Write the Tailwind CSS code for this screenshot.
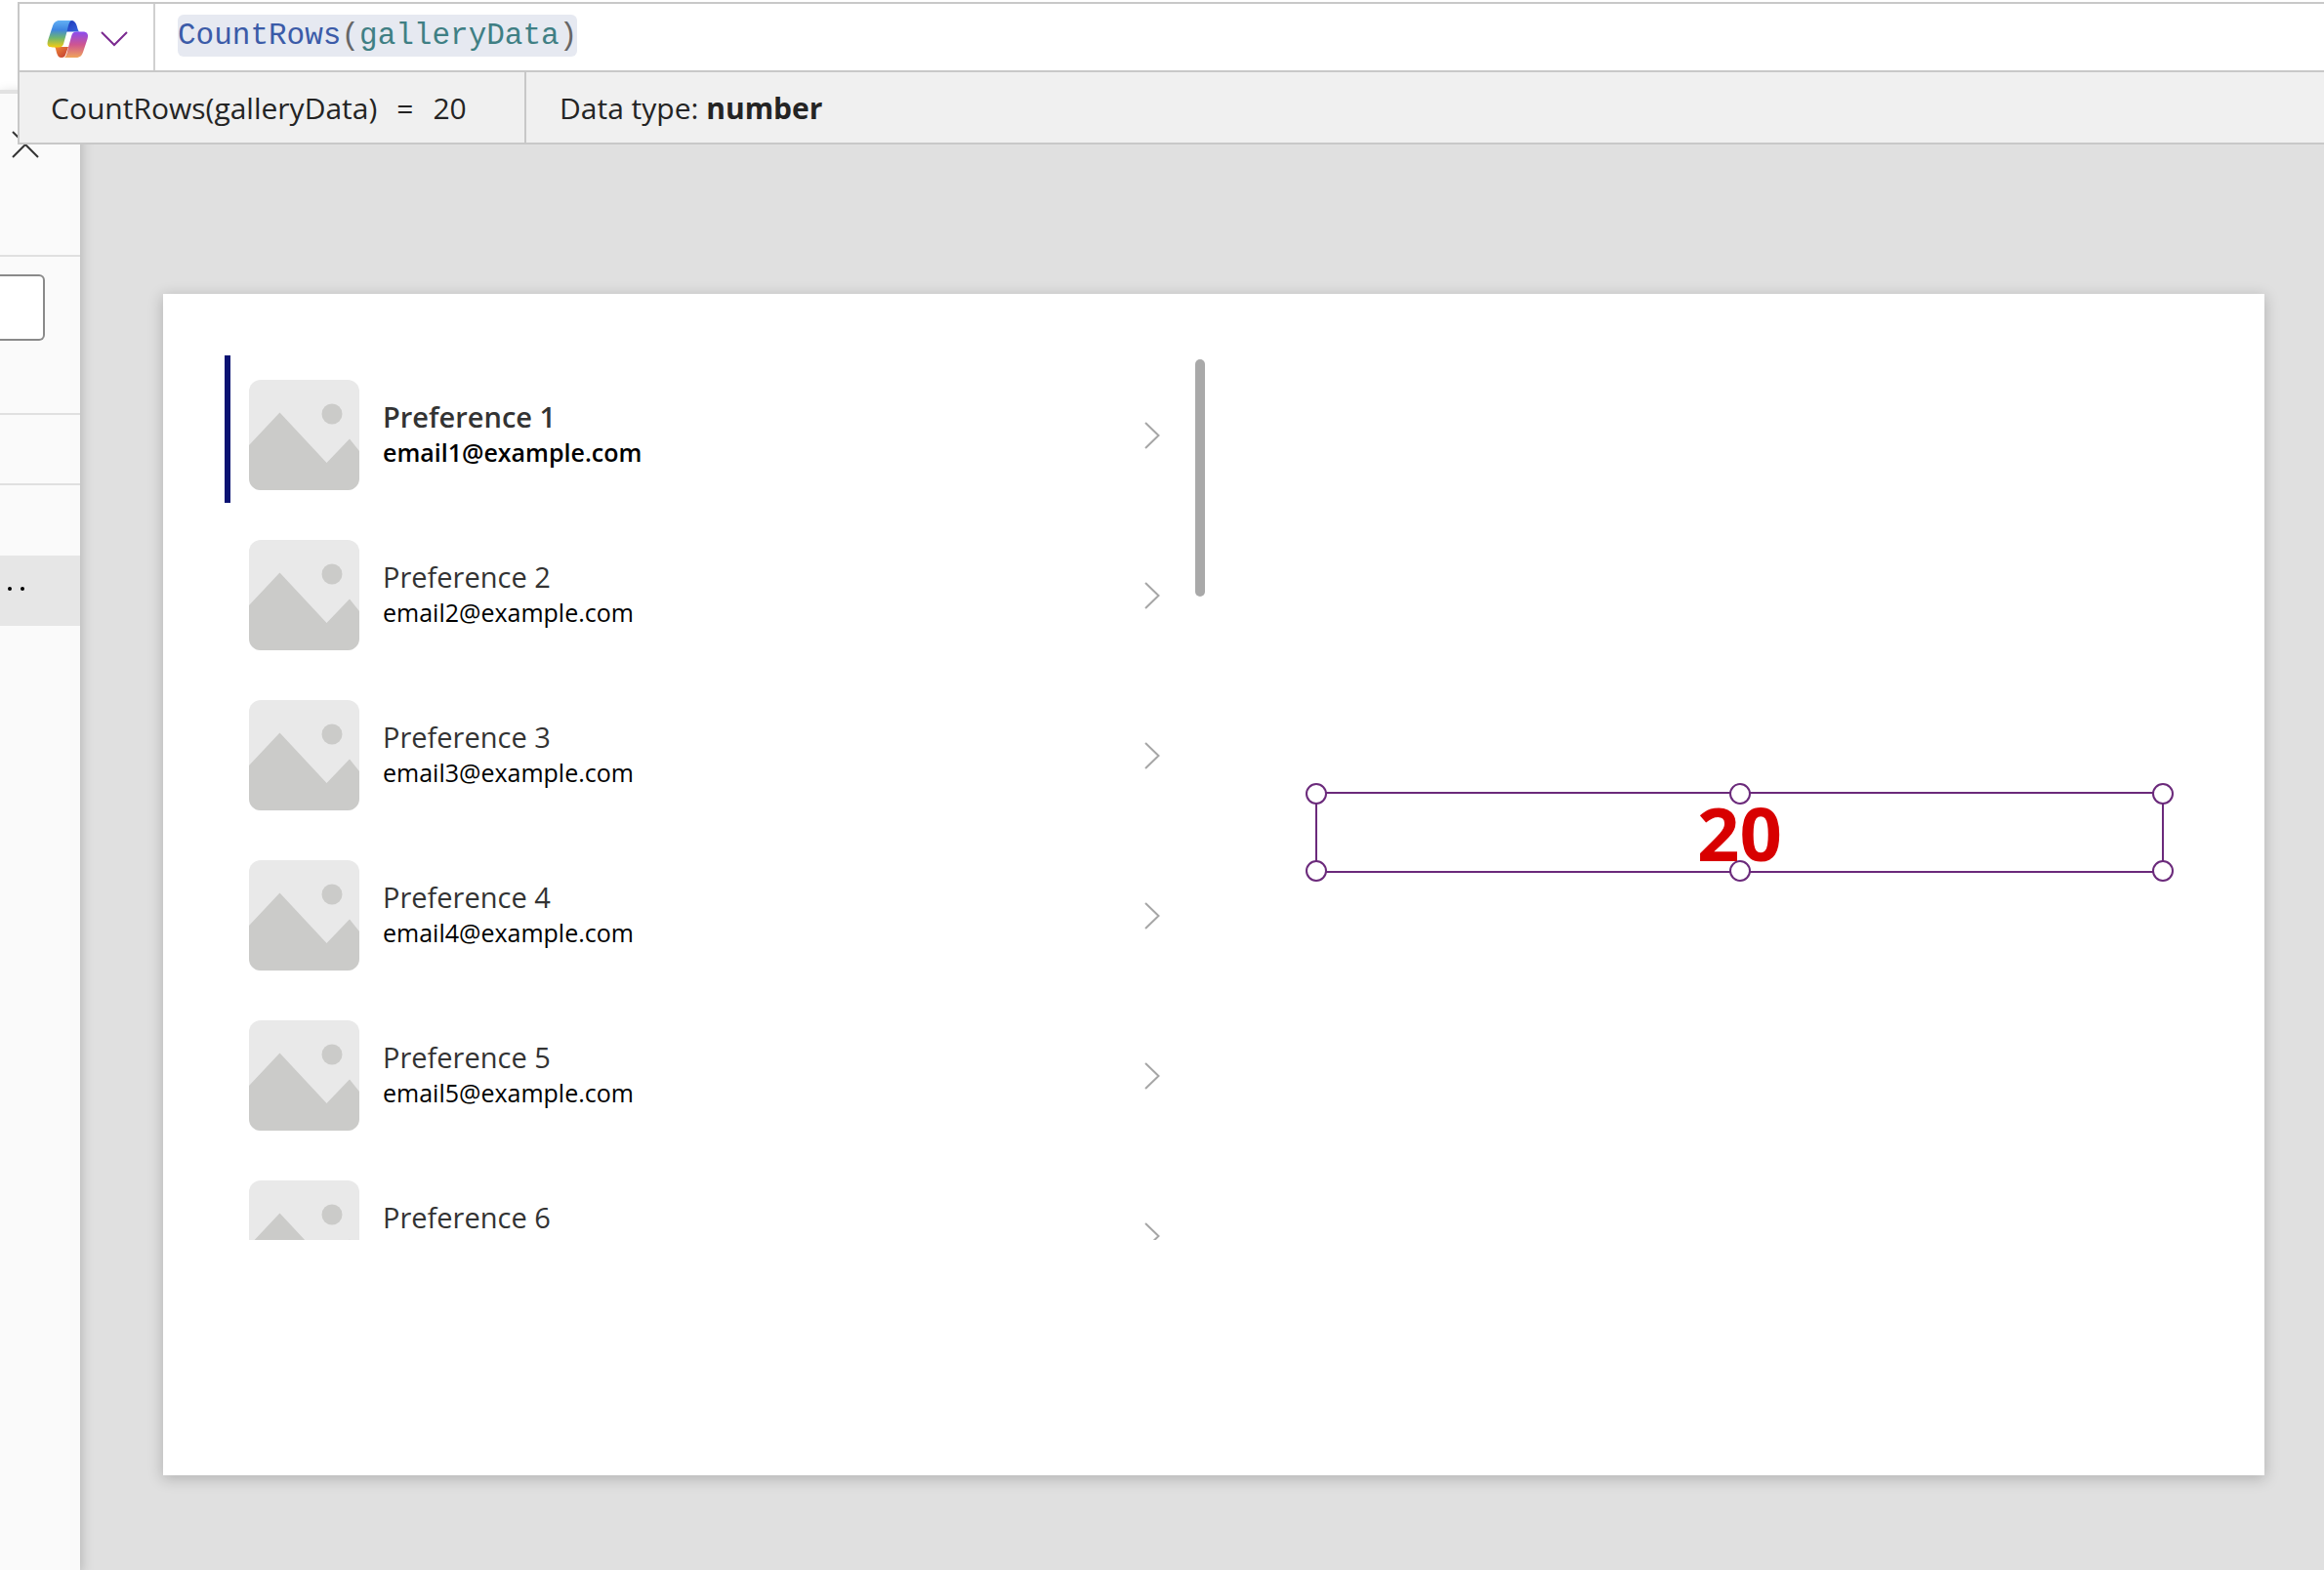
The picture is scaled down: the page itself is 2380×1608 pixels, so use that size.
<!DOCTYPE html>
<html lang="en">
<head>
<meta charset="utf-8">
<title>Canvas app studio</title>
<script src="https://cdn.jsdelivr.net/npm/@tailwindcss/browser@4"></script>
</head>
<body class="relative flex h-screen flex-col overflow-hidden bg-[#e0e0e0] font-['Open_Sans',sans-serif] text-[#242424]">

<svg class="hidden">
  <defs>
    <symbol id="placeholder" viewBox="0 0 113 113">
      <rect width="113" height="113" rx="12" fill="#e9e9e9"/>
      <circle cx="85" cy="35" r="10.5" fill="#cbcbc9"/>
      <path d="M0 67 31.500 33.500 79.500 85 103 60.500 113 73V101a12 12 0 0 1-12 12H12a12 12 0 0 1-12-12Z" fill="#cbcbc9"/>
    </symbol>
    <symbol id="chevron" viewBox="0 0 16 28">
      <path d="M1 1 14.500 14 1 27" fill="none" stroke="#a6a6a6" stroke-width="2"/>
    </symbol>
  </defs>
</svg>

<div class="h-[92px] shrink-0 bg-white"></div>

<!-- Formula bar, floating over the panel and the canvas -->
<header class="absolute top-[2px] right-0 left-[18px] z-20 border-y-2 border-l-2 border-[#c8c8c8] bg-white">
  <div class="flex h-[68px] items-stretch">
    <button type="button" aria-label="Copilot" class="flex w-[139px] items-center gap-3 border-r-2 border-[#d0d0d0] pt-1 pl-[28px]">
      <svg class="h-10 w-[43px]" viewBox="0 0 43 40">
        <defs>
          <linearGradient id="ga" x1="0" y1="0" x2="0" y2="1"><stop offset="0" stop-color="#62b0f5"/><stop offset=".35" stop-color="#3f86e0"/><stop offset=".65" stop-color="#6fb56f"/><stop offset="1" stop-color="#f5cc10"/></linearGradient>
          <linearGradient id="gb" x1="0" y1="0" x2="0" y2="1"><stop offset="0" stop-color="#8a4cf0"/><stop offset=".5" stop-color="#cf5590"/><stop offset="1" stop-color="#f0a55a"/></linearGradient>
          <linearGradient id="gc" x1="0" y1="0" x2="1" y2="1"><stop offset="0" stop-color="#1b35b8"/><stop offset="1" stop-color="#3a6be0"/></linearGradient>
          <linearGradient id="gd" x1="0" y1="0" x2="1" y2="1"><stop offset="0" stop-color="#f08a3a"/><stop offset="1" stop-color="#c0362e"/></linearGradient>
        </defs>
        <path d="M22 1h3c3 0 4.500 2 5.500 5l1.200 4c.5 2 1.300 2.500 3.300 2.500H19.500Z" fill="url(#gc)"/>
        <path d="M8 28h14l-2.500 7c-.8 2.500-2 4-4.500 4-3 0-4-2-5-5l-1-4C8.600 28.800 8.400 28.500 8 28Z" fill="url(#gd)"/>
        <path d="M26 1H13C9 1 7 3 5.500 8L1.500 20C-.5 26 .5 28.500 6 28.500h6c3 0 4.500-1.500 5.200-4l3.300-12C22 7 22.500 1 26 1Z" fill="url(#ga)"/>
        <path d="M17 39h13c4 0 6-2 7.500-7l4-12c1.500-5 0-7.500-5-7.500h-6c-3 0-4.500 1.500-5.200 4l-3.300 12C20.500 34 20 39 17 39Z" fill="url(#gb)"/>
      </svg>
      <svg class="h-4 w-7" viewBox="0 0 28 16"><path d="M1 1 14 14 27 1" fill="none" stroke="#7b2a90" stroke-width="2"/></svg>
    </button>
    <div class="pt-[11px] pl-[23px]">
      <code class="block h-[43px] rounded-md bg-[#e6e9f1] font-['Liberation_Mono',monospace] text-[31px] leading-[44px] text-[#3b5ba8]">CountRows<span class="text-[#666]">(</span><span class="text-[#3f7f84]">galleryData</span><span class="text-[#666]">)</span></code>
    </div>
  </div>
  <div class="flex h-[74px] items-stretch border-t-2 border-[#c8c8c8] bg-[#f0f0f0] text-[30px] leading-[74px]">
    <div class="flex w-[519px] gap-5 border-r-2 border-[#c8c8c8] pl-8"><span>CountRows(galleryData)</span><span>=</span><span>20</span></div>
    <div class="pl-[34px]">Data type: <b>number</b></div>
  </div>
</header>

<div class="flex min-h-0 flex-1">
  <!-- Tree view panel, scrolled so that its right edge shows -->
  <aside class="relative z-10 flex w-[82px] shrink-0 flex-col bg-[#fafafa] shadow-[1px_4px_12px_0_rgba(0,0,0,0.22)]">
    <div class="h-1 bg-[#e2e2e2]"></div>
    <div class="h-[167px] border-b-2 border-[#e0e0e0] pt-[38px] pl-[12px]">
      <button type="button" aria-label="Close panel" class="block">
        <svg class="size-7" viewBox="0 0 28 28"><path d="M1 1 27 27M27 1 1 27" stroke="#333" stroke-width="2"/></svg>
      </button>
    </div>
    <div class="h-[162px] border-b-2 border-[#e0e0e0] pt-[18px]">
      <input type="text" aria-label="Search" class="block h-[68px] w-[46px] rounded-r-md border-2 border-l-0 border-[#8a8a8a] bg-white">
    </div>
    <div class="h-[72px] border-b-2 border-[#e0e0e0]"></div>
    <div class="h-[72px]"></div>
    <button type="button" aria-label="More options" class="flex h-[72px] items-center gap-[9px] bg-[#e6e6e6] pb-1 pl-2">
      <span class="size-1 rounded-full bg-black"></span><span class="size-1 rounded-full bg-black"></span>
    </button>
  </aside>

  <!-- Canvas -->
  <main class="flex-1 pt-[209px] pr-[61px] pb-[97px] pl-[85px]">
    <section class="flex h-full bg-white pt-[63px] pl-[63px] shadow-[0_3px_14px_1px_rgba(0,0,0,0.2)]">
      <div class="relative h-[906px] w-[1004px] shrink-0 overflow-hidden">
        <ul id="gallery"></ul>
        <div class="absolute top-1 right-0 h-[243px] w-[10px] rounded-full bg-[#a9a9a9]"></div>
      </div>
      <div class="min-w-0 flex-1 pt-[447px] pr-[103px] pl-[113px]">
        <div class="relative flex h-[83px] items-center justify-center border-2 border-[#6b2a7b]">
          <output class="text-[76px] leading-[83px] font-bold text-[#d80000]">20</output>
          <span class="absolute -top-[11px] -left-[12px] size-[22px] rounded-full border-2 border-[#6b2a7b] bg-white"></span>
          <span class="absolute -top-[11px] left-1/2 size-[22px] -translate-x-1/2 rounded-full border-2 border-[#6b2a7b] bg-white"></span>
          <span class="absolute -top-[11px] -right-[12px] size-[22px] rounded-full border-2 border-[#6b2a7b] bg-white"></span>
          <span class="absolute -bottom-[11px] -left-[12px] size-[22px] rounded-full border-2 border-[#6b2a7b] bg-white"></span>
          <span class="absolute -bottom-[11px] left-1/2 size-[22px] -translate-x-1/2 rounded-full border-2 border-[#6b2a7b] bg-white"></span>
          <span class="absolute -right-[12px] -bottom-[11px] size-[22px] rounded-full border-2 border-[#6b2a7b] bg-white"></span>
        </div>
      </div>
    </section>
  </main>
</div>

<script>
  // The gallery repeats one row template for every record; the first is selected.
  const records = [
    { title: 'Preference 1', email: 'email1@example.com', selected: true },
    { title: 'Preference 2', email: 'email2@example.com' },
    { title: 'Preference 3', email: 'email3@example.com' },
    { title: 'Preference 4', email: 'email4@example.com' },
    { title: 'Preference 5', email: 'email5@example.com' },
    { title: 'Preference 6', email: '' },
  ];
  document.getElementById('gallery').innerHTML = records.map(r => `
    <li class="flex h-[164px]">
      <div class="h-[151px] w-[6px] ${r.selected ? 'bg-[#0a1272]' : ''}"></div>
      <div class="flex flex-1 items-start pt-[25px] pl-[19px]">
        <svg class="size-[113px]"><use href="#placeholder"/></svg>
        <div class="flex-1 pt-5 pl-6 ${r.selected ? 'font-semibold' : ''}">
          <div class="text-[29px] leading-[36px] text-[#333]">${r.title}</div>
          <div class="text-[25px] leading-[36px] text-black">${r.email}</div>
        </div>
        <button type="button" aria-label="Open" class="mt-[43px] mr-[46px]"><svg class="h-7 w-4"><use href="#chevron"/></svg></button>
      </div>
    </li>`).join('');
</script>
</body>
</html>
